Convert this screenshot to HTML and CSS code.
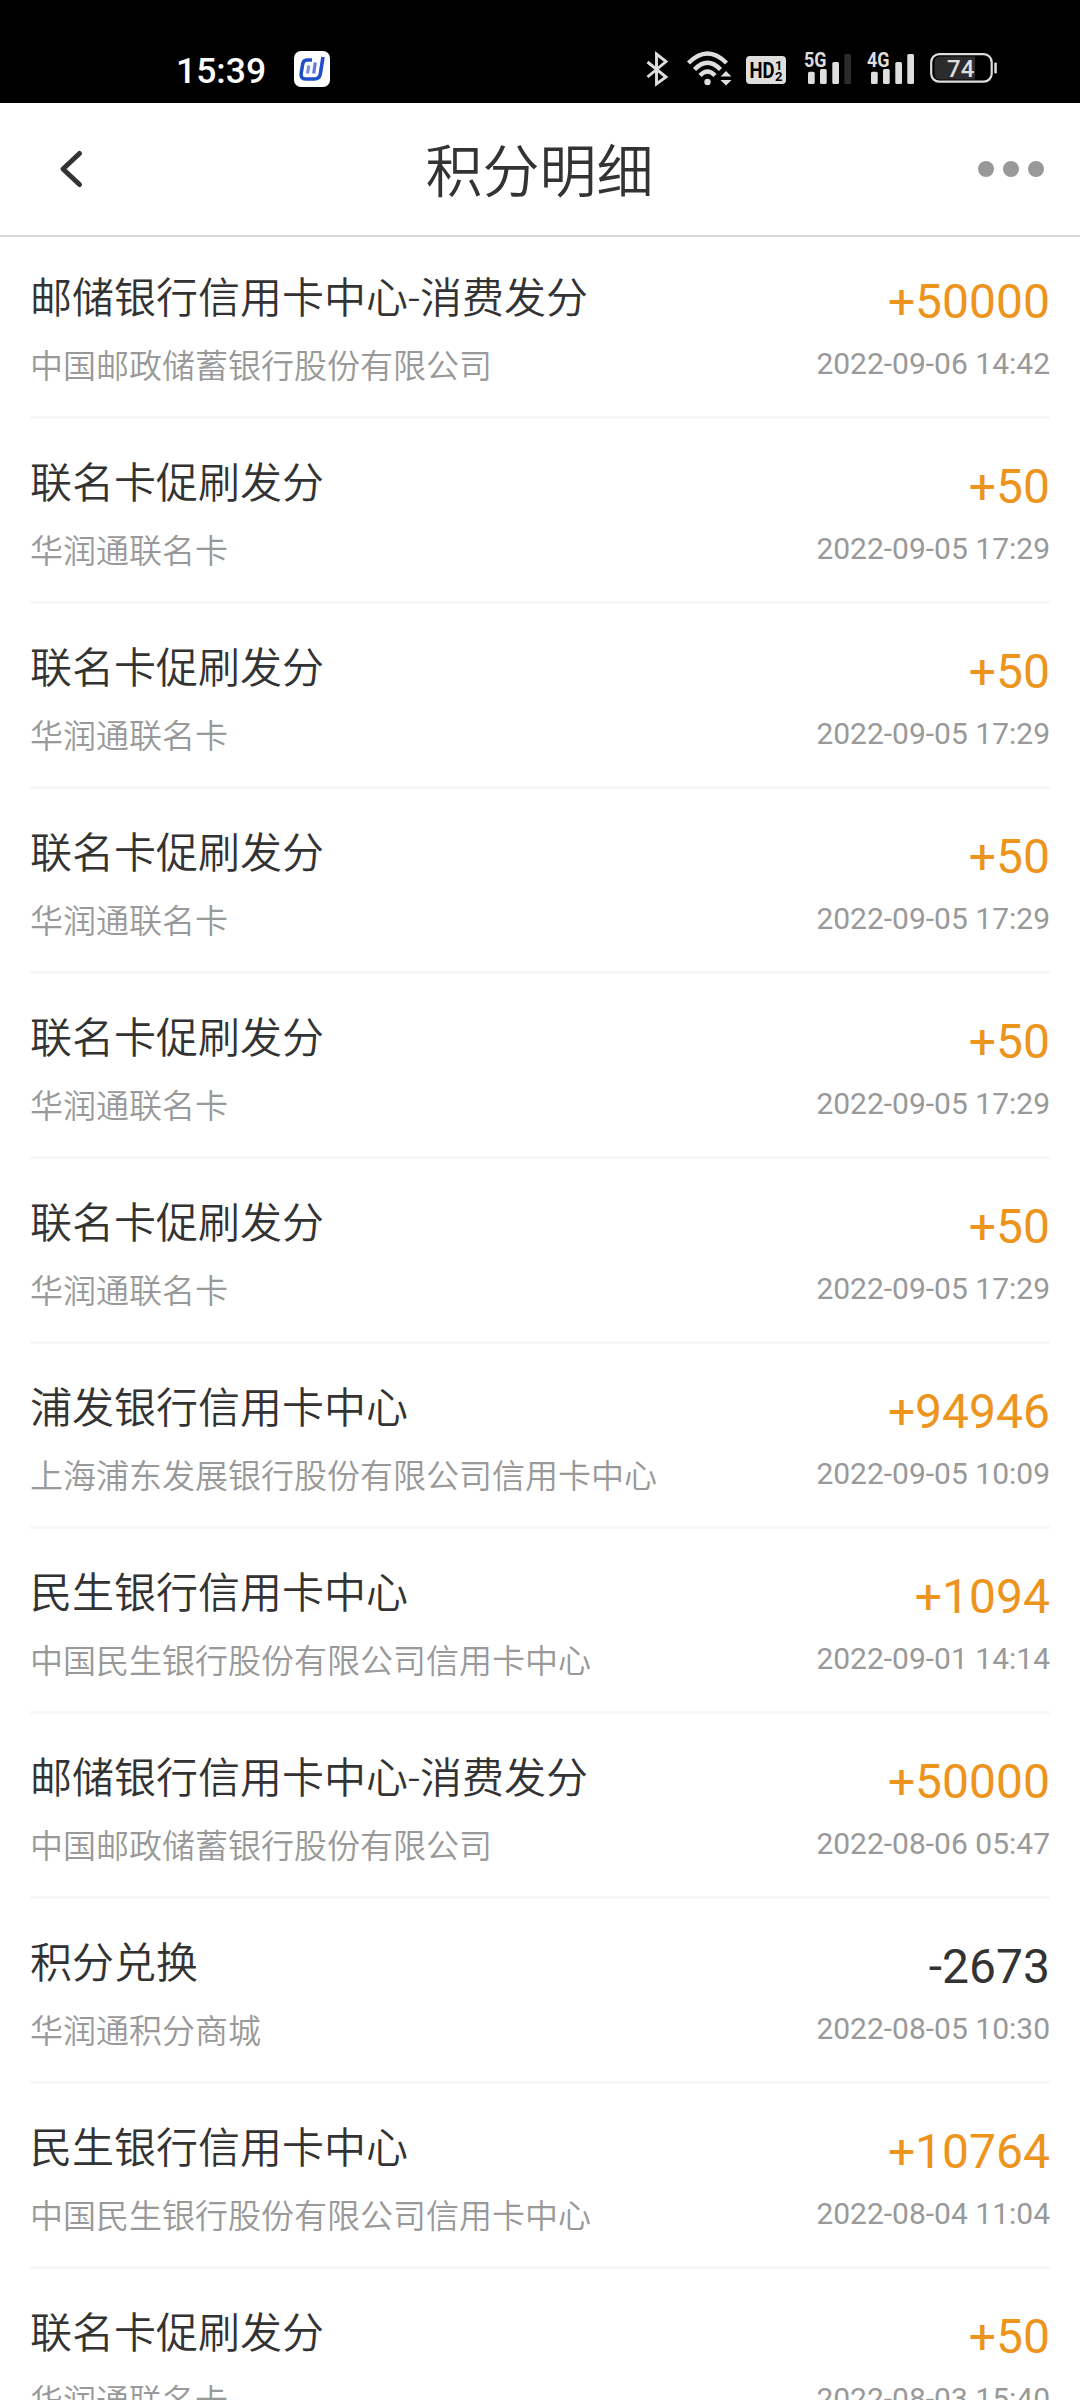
FILE: index.html
```
<!DOCTYPE html>
<html lang="zh-CN">
<head>
  <meta charset="UTF-8">
  <meta name="viewport" content="width=device-width, initial-scale=1.0">
  <title>积分明细</title>
  <link rel="stylesheet" href="styles.css">
</head>
<body>
  <div class="status-bar">
    <span class="time">15:39</span>
    <svg class="app-icon" width="36" height="36" viewBox="0 0 36 36">
      <rect width="36" height="36" rx="7" fill="#fff"/>
      <path d="M18 9 H13.500 Q9.500 9 8.800 12.500 L7.200 22 Q6.300 28 11.500 28 H20.500 Q25.500 28 26.300 23 L29 6" fill="none" stroke="#2050c8" stroke-width="3.600"/>
      <path d="M14.800 14.500 L13.500 22.500" stroke="#7d8fe0" stroke-width="3.200"/>
      <path d="M21.300 11.500 L19.700 22.500" stroke="#6178dc" stroke-width="3.200"/>
    </svg>

    <div class="status-icons">
      <!-- bluetooth -->
      <svg class="icon-bt" width="26" height="40" viewBox="0 0 26 40" fill="none" stroke="#dedede" stroke-width="2.900">
        <path d="M2.500 14 L21 29 L11.500 36 V6 L21 13.500 L2.500 29"/>
      </svg>
      <!-- wifi -->
      <svg class="icon-wifi" width="48" height="40" viewBox="0 0 48 40">
        <g fill="none" stroke="#dedede" stroke-width="4.300">
          <path d="M2.500 15 Q21.500 -4 40.500 15"/>
          <path d="M8.500 21.500 Q21.500 8 34.500 21.500"/>
          <path d="M14 27.500 Q21.500 19.500 29 27.500"/>
        </g>
        <circle cx="21.500" cy="34" r="3.200" fill="#dedede"/>
        <path d="M34.500 28.500 L40 23 L45.500 28.500 Z M34.500 32 L40 37.500 L45.500 32 Z" fill="#dedede"/>
      </svg>
      <!-- dual sim HD -->
      <svg class="icon-hd" width="40" height="40" viewBox="0 0 40 40">
        <rect y="8" width="40" height="28" rx="4" fill="#dedede"/>
        <text class="hd-text" x="3.500" y="29.500" textLength="25" lengthAdjust="spacingAndGlyphs">HD</text>
        <text class="hd-num" x="29" y="21.500">1</text>
        <text class="hd-num" x="29" y="32.500">2</text>
      </svg>
      <svg class="icon-signal" width="48" height="40" viewBox="0 0 48 40" fill="#dedede">
        <text class="net-text" x="0" y="18.500" textLength="22.500" lengthAdjust="spacingAndGlyphs">5G</text>
        <rect x="4" y="23.700" width="6.700" height="12.300" rx="1.500"/>
        <rect x="16" y="21" width="6.700" height="15" rx="1.500"/>
        <rect x="28.300" y="14" width="6.700" height="22" rx="1.500"/>
        <rect x="40.300" y="6" width="6.700" height="30" rx="1.500" fill="#2c2c2c"/>
      </svg>
      <svg class="icon-signal" width="48" height="40" viewBox="0 0 48 40" fill="#dedede">
        <text class="net-text" x="0" y="18.500" textLength="22.500" lengthAdjust="spacingAndGlyphs">4G</text>
        <rect x="4" y="23.700" width="6.700" height="12.300" rx="1.500"/>
        <rect x="16" y="21" width="6.700" height="15" rx="1.500"/>
        <rect x="28.300" y="14" width="6.700" height="22" rx="1.500"/>
        <rect x="40.300" y="6" width="6.700" height="30" rx="1.500"/>
      </svg>
      <!-- battery -->
      <svg class="icon-battery" width="68" height="40" viewBox="0 0 68 40">
        <rect x="1.200" y="6.200" width="60.500" height="27.500" rx="8" fill="none" stroke="#dedede" stroke-width="2.200"/>
        <path d="M10 8.500 H45 V31.500 H10 Q4.500 31.500 4.500 26 V14 Q4.500 8.500 10 8.500 Z" fill="#2c2c2c"/>
        <rect x="64.300" y="14.500" width="2.500" height="11" rx="1" fill="#dedede"/>
        <text class="battery-text" x="17" y="28.700">74</text>
      </svg>
    </div>
  </div>

  <header class="header">
    <svg class="back" width="30" height="44" viewBox="0 0 30 44">
      <path d="M24.500 6.500 L8 22 L24.500 37.500" fill="none" stroke="#333" stroke-width="5" stroke-linecap="round" stroke-linejoin="round"/>
    </svg>
    <h1 class="header-title">积分明细</h1>
    <div class="more">
      <span class="dot"></span>
      <span class="dot"></span>
      <span class="dot"></span>
    </div>
  </header>

  <div class="list">
    <div class="item">
      <div class="info">
        <div class="name">邮储银行信用卡中心-消费发分</div>
        <div class="desc">中国邮政储蓄银行股份有限公司</div>
      </div>
      <div class="detail">
        <div class="amount">+50000</div>
        <div class="date">2022-09-06 14:42</div>
      </div>
    </div>

    <div class="item">
      <div class="info">
        <div class="name">联名卡促刷发分</div>
        <div class="desc">华润通联名卡</div>
      </div>
      <div class="detail">
        <div class="amount">+50</div>
        <div class="date">2022-09-05 17:29</div>
      </div>
    </div>

    <div class="item">
      <div class="info">
        <div class="name">联名卡促刷发分</div>
        <div class="desc">华润通联名卡</div>
      </div>
      <div class="detail">
        <div class="amount">+50</div>
        <div class="date">2022-09-05 17:29</div>
      </div>
    </div>

    <div class="item">
      <div class="info">
        <div class="name">联名卡促刷发分</div>
        <div class="desc">华润通联名卡</div>
      </div>
      <div class="detail">
        <div class="amount">+50</div>
        <div class="date">2022-09-05 17:29</div>
      </div>
    </div>

    <div class="item">
      <div class="info">
        <div class="name">联名卡促刷发分</div>
        <div class="desc">华润通联名卡</div>
      </div>
      <div class="detail">
        <div class="amount">+50</div>
        <div class="date">2022-09-05 17:29</div>
      </div>
    </div>

    <div class="item">
      <div class="info">
        <div class="name">联名卡促刷发分</div>
        <div class="desc">华润通联名卡</div>
      </div>
      <div class="detail">
        <div class="amount">+50</div>
        <div class="date">2022-09-05 17:29</div>
      </div>
    </div>

    <div class="item">
      <div class="info">
        <div class="name">浦发银行信用卡中心</div>
        <div class="desc">上海浦东发展银行股份有限公司信用卡中心</div>
      </div>
      <div class="detail">
        <div class="amount">+94946</div>
        <div class="date">2022-09-05 10:09</div>
      </div>
    </div>

    <div class="item">
      <div class="info">
        <div class="name">民生银行信用卡中心</div>
        <div class="desc">中国民生银行股份有限公司信用卡中心</div>
      </div>
      <div class="detail">
        <div class="amount">+1094</div>
        <div class="date">2022-09-01 14:14</div>
      </div>
    </div>

    <div class="item">
      <div class="info">
        <div class="name">邮储银行信用卡中心-消费发分</div>
        <div class="desc">中国邮政储蓄银行股份有限公司</div>
      </div>
      <div class="detail">
        <div class="amount">+50000</div>
        <div class="date">2022-08-06 05:47</div>
      </div>
    </div>

    <div class="item">
      <div class="info">
        <div class="name">积分兑换</div>
        <div class="desc">华润通积分商城</div>
      </div>
      <div class="detail">
        <div class="amount minus">-2673</div>
        <div class="date">2022-08-05 10:30</div>
      </div>
    </div>

    <div class="item">
      <div class="info">
        <div class="name">民生银行信用卡中心</div>
        <div class="desc">中国民生银行股份有限公司信用卡中心</div>
      </div>
      <div class="detail">
        <div class="amount">+10764</div>
        <div class="date">2022-08-04 11:04</div>
      </div>
    </div>

    <div class="item">
      <div class="info">
        <div class="name">联名卡促刷发分</div>
        <div class="desc">华润通联名卡</div>
      </div>
      <div class="detail">
        <div class="amount">+50</div>
        <div class="date">2022-08-03 15:40</div>
      </div>
    </div>
  </div>
</body>
</html>
```
FILE: styles.css
```
* {
  box-sizing: border-box;
}

body {
  font-family: Roboto, "Noto Sans CJK SC", sans-serif;
  margin: 0;
  width: 1080px;
  height: 2400px;
  overflow: hidden;
  background-color: #fff;
  color: #333;
}

.status-bar {
  display: flex;
  align-items: flex-start;
  height: 103px;
  padding: 48px 82px 0 176px;
  background-color: #000;
}

.time {
  width: 118px;
  color: #fff;
  font-size: 35.5px;
  font-weight: 500;
  line-height: 46px;
}

.app-icon {
  margin-top: 3px;
}

.status-icons {
  display: flex;
  margin-left: auto;
}

.icon-wifi {
  margin-left: 15px;
}

.icon-hd {
  margin-left: 12px;
  margin-right: 3px;
}

.icon-signal {
  margin-left: 15px;
}

.icon-battery {
  margin-left: 15px;
}

.hd-text {
  font-size: 21.5px;
  font-weight: 700;
}

.hd-num {
  font-size: 13px;
  font-weight: 700;
}

.net-text {
  font-size: 19.5px;
  font-weight: 700;
}

.battery-text {
  font-size: 24px;
  font-weight: 500;
  fill: #dedede;
}

.header {
  display: flex;
  align-items: center;
  justify-content: space-between;
  height: 134px;
  padding: 0 36px 0 55px;
  border-bottom: 2px solid #d5d5d5;
}

.header-title {
  margin: 0 0 4px 16px;
  font-family: "Noto Sans CJK SC", sans-serif;
  font-size: 57px;
  font-weight: 350;
  line-height: 80px;
}

.back {
  width: 30px;
}

.more {
  display: flex;
  gap: 9px;
}

.dot {
  width: 16px;
  height: 16px;
  border-radius: 50%;
  background-color: #999;
}

.list {
  padding: 0 30px;
}

.item {
  display: flex;
  justify-content: space-between;
  height: 185px;
  padding-top: 38px;
  border-bottom: 3px solid #f7f7f7;
}

.item:first-child {
  height: 182px;
  padding-top: 35px;
}

.info {
  padding-top: 2px;
}

.name {
  font-size: 42px;
  font-weight: 350;
  line-height: 50px;
}

.desc {
  margin-top: 23px;
  color: #999;
  font-size: 33px;
  font-weight: 350;
  line-height: 40px;
}

.detail {
  padding-top: 5px;
  text-align: right;
}

.amount {
  color: #ed941c;
  font-size: 48px;
  line-height: 50px;
}

.amount.minus {
  color: #333;
}

.date {
  margin-top: 17px;
  color: #999;
  font-size: 30px;
  line-height: 40px;
}
```
